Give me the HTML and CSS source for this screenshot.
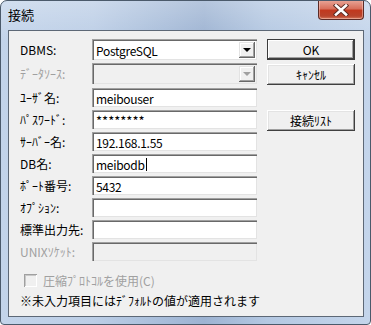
FILE: index.html
```html
<!DOCTYPE html>
<html>
<head>
  <meta charset="utf-8">
  <title>接続</title>
  <link rel="stylesheet" href="styles.css">
</head>
<body>
  <div class="window">
    <div class="titlebar">
      <span class="title">接続</span>
      <div class="close">
        <svg width="18" height="12" viewBox="0 0 18 12">
          <path d="M4 1.5 L14 10.5 M14 1.5 L4 10.5" stroke="#5a2a22" stroke-width="4.4" stroke-linecap="square"/>
          <path d="M4 1.5 L14 10.5 M14 1.5 L4 10.5" stroke="#ffffff" stroke-width="2.6" stroke-linecap="square"/>
        </svg>
      </div>
    </div>

    <div class="client">
      <div class="main">
        <div class="fields">
          <div class="row combo-row">
            <label>DBMS:</label>
            <div class="combo">
              <span class="value">PostgreSQL</span>
              <span class="drop"><span class="arrow"></span></span>
            </div>
          </div>
          <div class="row combo-row disabled">
            <label>ﾃﾞｰﾀｿｰｽ:</label>
            <div class="combo">
              <span class="value"></span>
              <span class="drop"><span class="arrow"></span></span>
            </div>
          </div>
          <div class="row">
            <label>ﾕｰｻﾞ名:</label>
            <div class="box">meibouser</div>
          </div>
          <div class="row">
            <label>ﾊﾟｽﾜｰﾄﾞ:</label>
            <div class="box pass">********</div>
          </div>
          <div class="row">
            <label>ｻｰﾊﾞｰ名:</label>
            <div class="box">192.168.1.55</div>
          </div>
          <div class="row">
            <label>DB名:</label>
            <div class="box">meibodb<span class="caret"></span></div>
          </div>
          <div class="row">
            <label>ﾎﾟｰﾄ番号:</label>
            <div class="box">5432</div>
          </div>
          <div class="row">
            <label>ｵﾌﾟｼｮﾝ:</label>
            <div class="box"></div>
          </div>
          <div class="row">
            <label>標準出力先:</label>
            <div class="box"></div>
          </div>
          <div class="row disabled">
            <label>UNIXｿｹｯﾄ:</label>
            <div class="box"></div>
          </div>
        </div>

        <div class="buttons">
          <button class="btn default">OK</button>
          <button class="btn">ｷｬﾝｾﾙ</button>
          <button class="btn list">接続ﾘｽﾄ</button>
        </div>
      </div>

      <div class="check disabled">
        <span class="checkbox"></span>
        <span>圧縮ﾌﾟﾛﾄｺﾙを使用(C)</span>
      </div>

      <p class="note">※未入力項目にはﾃﾞﾌｫﾙﾄの値が適用されます</p>
    </div>
  </div>
</body>
</html>
```

FILE: styles.css
```css
body {
  margin: 0;
  font-family: "Noto Sans CJK JP", "Liberation Sans", sans-serif;
  font-size: 12px;
  background: #ffffff;
}

.window {
  width: 371px;
  height: 325px;
  box-sizing: border-box;
  border: 1px solid #4b5a6b;
  border-radius: 7px 7px 4px 4px;
  background:
    linear-gradient(to bottom, rgba(255, 255, 255, 0.25), rgba(255, 255, 255, 0) 40px),
    linear-gradient(to right, #c3d4ea 0%, #bccee6 25%, #a7bcd9 45%, #9db3d2 55%, #b4c8e2 72%, #c4d5eb 100%);
  display: flex;
  flex-direction: column;
  overflow: hidden;
}

.titlebar {
  height: 29px;
  display: flex;
  align-items: flex-start;
  padding-left: 7px;
}

.title {
  font-size: 13px;
  line-height: 13px;
  margin-top: 7px;
  color: #000;
}

.close {
  margin-left: auto;
  margin-right: 6px;
  margin-top: -1px;
  width: 46px;
  height: 20px;
  box-sizing: border-box;
  border: 1px solid #5b2b26;
  border-top: none;
  border-radius: 0 0 4px 4px;
  background: linear-gradient(to bottom, #e9a89a 0%, #d8705c 45%, #c1391f 55%, #b8442c 85%, #d77a5e 100%);
  box-shadow: inset 0 0 0 1px rgba(255, 220, 210, 0.45);
  display: flex;
  align-items: center;
  justify-content: center;
}

.client {
  height: 287px;
  margin: 0 6px 0 7px;
  box-sizing: border-box;
  border: 1px solid #5d6876;
  background: #f0f0f0;
  padding: 8px 8px 0 11px;
}

.main {
  display: flex;
  gap: 10px;
}

.fields {
  width: 237px;
}

.row {
  display: flex;
  align-items: center;
  height: 19px;
  margin-bottom: 3px;
}

.row.combo-row {
  height: 21px;
}

.row.combo-row.disabled {
  margin-bottom: 4px;
}

.row label {
  width: 72px;
  flex-shrink: 0;
  color: #000;
  line-height: 14px;
}

.disabled label,
.check.disabled {
  color: #a0a0a0;
}

.box,
.combo {
  width: 165px;
  height: 100%;
  box-sizing: border-box;
  background: #ffffff;
  box-shadow: inset 1px 1px #a0a0a0, inset 2px 2px #696969, inset -1px -1px #e3e3e3;
  padding-left: 4px;
  display: flex;
  align-items: center;
  font-size: 12px;
  letter-spacing: -0.3px;
  line-height: 15px;
  padding-top: 1px;
}

.box.pass {
  font-size: 13px;
  letter-spacing: 0;
}

.disabled .box,
.disabled .combo {
  background: #f0f0f0;
}

.caret {
  display: inline-block;
  width: 1px;
  height: 13px;
  background: #000;
  margin-left: 1px;
}

.combo {
  padding-right: 2px;
}

.combo .value {
  flex: 1;
}

.drop {
  width: 16px;
  height: 16px;
  box-sizing: border-box;
  background: #f0f0f0;
  box-shadow: inset -1px -1px #696969, inset 1px 1px #e3e3e3, inset -2px -2px #a0a0a0, inset 2px 2px #ffffff;
  display: flex;
  align-items: center;
  justify-content: center;
  margin-top: -1px;
}

.arrow {
  width: 0;
  height: 0;
  border-left: 4px solid transparent;
  border-right: 4px solid transparent;
  border-top: 4px solid #000;
}

.disabled .arrow {
  border-top-color: #a0a0a0;
}

.buttons {
  display: flex;
  flex-direction: column;
  width: 88px;
}

.btn {
  height: 21px;
  width: 88px;
  margin: 0 0 4px 0;
  padding: 0;
  border: none;
  background: #f0f0f0;
  font-family: "Noto Sans CJK JP", "Liberation Sans", sans-serif;
  font-size: 12px;
  color: #000;
  box-shadow: inset -1px -1px #404040, inset 1px 1px #ffffff, inset -2px -2px #a0a0a0, inset 2px 2px #e3e3e3;
}

.btn.default {
  box-shadow: inset 0 0 0 1px #3c3c3c, inset -2px -2px #404040, inset 2px 2px #ffffff, inset -3px -3px #a0a0a0;
}

.btn.list {
  margin-top: 21px;
}

.check {
  display: flex;
  align-items: center;
  gap: 6px;
  margin-top: 9px;
  padding-left: 4px;
  height: 14px;
}

.checkbox {
  width: 13px;
  height: 13px;
  box-sizing: border-box;
  background: #f0f0f0;
  box-shadow: inset 1px 1px #a0a0a0, inset -1px -1px #ffffff, inset 2px 2px #c8c8c8;
}

.note {
  margin: 7px 0 0 0;
  line-height: 14px;
  color: #000;
}
```
